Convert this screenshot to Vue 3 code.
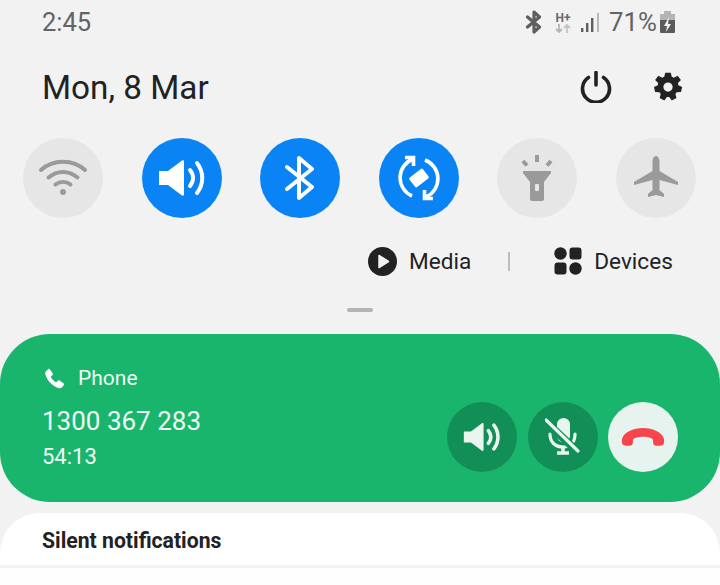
<script setup>
const wifiColor = '#9a9a9a'
</script>

<template>
  <div class="screen">
    <header class="status">
      <span class="time">2:45</span>
      <div class="status-right">
        <svg class="s-bt" width="18" height="24" viewBox="0 0 18 24"><path d="M2.500 7 L14.500 17 L9 22 V2 L14.500 7 L2.500 17" fill="none" stroke="#5f5f5f" stroke-width="3.200" stroke-linejoin="round" stroke-linecap="round"/></svg>
        <div class="hplus"><span class="hp">H+</span><svg width="16" height="9" viewBox="0 0 16 9"><path d="M4 0v8M1 5l3 3 3-3" fill="none" stroke="#b5b5b5" stroke-width="1.800"/><path d="M12 9V1M9 4l3-3 3 3" fill="none" stroke="#c4c4c4" stroke-width="1.800"/></svg></div>
        <svg class="s-sig" width="20" height="21" viewBox="0 0 20 21"><rect x="1" y="16" width="2.400" height="4" fill="#5f5f5f"/><rect x="6" y="11" width="2.400" height="9" fill="#5f5f5f"/><rect x="11" y="6" width="2.400" height="14" fill="#5f5f5f"/><rect x="17" y="1" width="2" height="19" fill="#b9b9b9"/></svg>
        <span class="pct">71%</span>
        <svg width="15" height="22" viewBox="0 0 15 22"><path d="M4 0h7v3h4v7H0V3h4z" fill="#b4b4b4"/><path d="M0 9h15v12a1 1 0 0 1-1 1H1a1 1 0 0 1-1-1z" fill="#5b5b5b"/><path d="M9 6 4 15h3l-1 6 5-8H8z" fill="#f2f2f2"/></svg>
      </div>
    </header>

    <div class="date-row">
      <span class="date">Mon, 8 Mar</span>
      <div class="date-actions">
        <svg width="32" height="32" viewBox="0 0 32 32"><path d="M8.500 6.500a13.500 13.500 0 1 0 15 0" fill="none" stroke="#222" stroke-width="3.600" stroke-linecap="round"/><path d="M16 1.500V14" stroke="#222" stroke-width="3.600" stroke-linecap="round"/></svg>
        <svg width="30" height="30" viewBox="0 0 24 24"><path fill="#222" fill-rule="evenodd" d="M9.800.5h4.400l.8 3.200 1.700.8 3-1.500 2.600 3.400-2.300 2.300.3 1.900 3 1.400-.9 4-3.400.1-1.100 1.500.9 3.200-3.800 1.900-2-2.700h-1.900l-2 2.700-3.800-1.900.9-3.200-1.100-1.500-3.400-.1-.9-4 3-1.400.3-1.900L1.700 6.400l2.600-3.400 3 1.500L9 3.700zM12 8.300a3.700 3.700 0 1 0 0 7.400 3.700 3.700 0 0 0 0-7.400z"/></svg>
      </div>
    </div>

    <div class="toggles">
      <div class="toggle">
        <svg width="50" height="40" viewBox="0 0 50 40"><path d="M3 12C15 1 35 1 47 12" fill="none" :stroke="wifiColor" stroke-width="4" stroke-linecap="round"/><path d="M10.500 19.500C19 12 31 12 39.500 19.500" fill="none" :stroke="wifiColor" stroke-width="4" stroke-linecap="round"/><path d="M17.500 26.500C22 23 28 23 32.500 26.500" fill="none" :stroke="wifiColor" stroke-width="4" stroke-linecap="round"/><circle cx="25" cy="34" r="3" :fill="wifiColor"/></svg>
      </div>
      <div class="toggle on">
        <svg width="48" height="38" viewBox="0 0 48 38"><path d="M1 12h9L24 1.500c1-.5 2 0 2 1v33c0 1-1 1.500-2 1L10 26H1z" fill="#fff"/><path d="M32 11c4 5 4 11 0 16M39 4c7 9 7 21 0 30" fill="none" stroke="#fff" stroke-width="4" stroke-linecap="round"/></svg>
      </div>
      <div class="toggle on">
        <svg width="32" height="46" viewBox="0 0 32 46"><path d="M3 12 L28 32 L15 43 V3 L28 14 L3 34" fill="none" stroke="#fff" stroke-width="4" stroke-linejoin="round" stroke-linecap="round"/></svg>
      </div>
      <div class="toggle on">
        <svg width="46" height="46" viewBox="0 0 46 46"><path d="M17 4A20 20 0 0 0 16 41" fill="none" stroke="#fff" stroke-width="3.600"/><path d="M9 2.500h8.500V11" fill="none" stroke="#fff" stroke-width="3.600"/><path d="M29 5A20 20 0 0 1 30 42" fill="none" stroke="#fff" stroke-width="3.600"/><path d="M37 43.500h-8.500V35" fill="none" stroke="#fff" stroke-width="3.600"/><rect x="14.500" y="17" width="17" height="12" rx="1.500" transform="rotate(-38 23 23)" fill="#fff"/></svg>
      </div>
      <div class="toggle">
        <svg width="32" height="46" viewBox="0 0 32 46"><path d="M2 16h28v2l-7 9v17a2 2 0 0 1-2 2H11a2 2 0 0 1-2-2V27L2 18z" fill="#9a9a9a"/><rect x="14" y="29" width="4" height="7" rx="1" fill="#e6e6e6"/><rect x="14" y="0" width="4" height="7" fill="#9a9a9a"/><path d="M2 6l4 4.500M30 6l-4 4.500" stroke="#9a9a9a" stroke-width="4"/></svg>
      </div>
      <div class="toggle">
        <svg width="46" height="44" viewBox="0 0 46 44"><path d="M23 0c2.200 0 3.500 3 3.500 6v9L45 26v3L26.500 24v10l4.500 4v3l-8-2-8 2v-3l4.500-4V24L1 29v-3l18.500-11V6c0-3 1.300-6 3.500-6z" fill="#9a9a9a"/></svg>
      </div>
    </div>

    <div class="media-row">
      <div class="media">
        <svg width="29" height="29" viewBox="0 0 29 29"><circle cx="14.500" cy="14.500" r="14.500" fill="#222"/><path d="M11 8.500 20.500 14.500 11 20.500z" fill="#f2f2f2" stroke="#f2f2f2" stroke-width="1.500" stroke-linejoin="round"/></svg>
        <span>Media</span>
      </div>
      <i class="sep"></i>
      <div class="devices">
        <svg width="28" height="28" viewBox="0 0 28 28"><circle cx="6.500" cy="6.500" r="6.200" fill="#222"/><rect x="15.500" y="0.500" width="12" height="12" rx="3" fill="#222"/><rect x="0.500" y="15.500" width="12" height="12" rx="3" fill="#222"/><circle cx="21.500" cy="21.500" r="6.200" fill="#222"/></svg>
        <span>Devices</span>
      </div>
    </div>

    <div class="handle"></div>

    <section class="call">
      <div class="call-info">
        <div class="app">
          <svg width="21" height="21" viewBox="0 0 24 24"><path fill="#fff" d="M6.600 1.500 10 6.200c.4.600.3 1.300-.2 1.800L7.700 10c1 2.500 3.700 5.300 6.300 6.400l2.100-2.100c.5-.5 1.300-.5 1.800-.1l4.600 3.400c.6.500.7 1.300.2 1.900l-2 2.500c-1 1.100-2.400 1.500-3.800 1C9.500 20.500 3.500 14.500 1.500 7.100 1.100 5.700 1.500 4.300 2.600 3.300L4.700 1.300c.6-.5 1.400-.4 1.900.2z"/></svg>
          <span>Phone</span>
        </div>
        <div class="number">1300 367 283</div>
        <div class="elapsed">54:13</div>
      </div>
      <div class="call-actions">
        <div class="action dark">
          <svg width="38" height="30" viewBox="0 0 48 38"><path d="M1 12h9L24 1.500c1-.5 2 0 2 1v33c0 1-1 1.500-2 1L10 26H1z" fill="#eaf5ef"/><path d="M32 11c4 5 4 11 0 16M39 4c7 9 7 21 0 30" fill="none" stroke="#eaf5ef" stroke-width="4.500" stroke-linecap="round"/></svg>
        </div>
        <div class="action dark">
          <svg width="36" height="38" viewBox="0 0 36 38"><path d="M12 6a6.500 6 0 0 1 13 0v12a6.500 6.500 0 0 1-13 0z" fill="#eaf5ef"/><path d="M5 16c0 8 5 13 13 13s12-5 12-13" fill="none" stroke="#eaf5ef" stroke-width="3.200" stroke-linecap="round"/><path d="M18 29v5" stroke="#eaf5ef" stroke-width="3.500"/><path d="M12 35h12" stroke="#eaf5ef" stroke-width="3.500"/><path d="M1 4 34 35" stroke="#128f57" stroke-width="8"/><path d="M1 2 33 33" stroke="#eaf5ef" stroke-width="3.200" stroke-linecap="round"/></svg>
        </div>
        <div class="action end">
          <svg width="44" height="20" viewBox="0 0 44 20"><path d="M1 12C3 5 12 1 22 1s19 4 21 11c.400 2 0 5-1 6-1 .800-6 1-8 .500-1.500-.300-2-2-2-5 0-1.500-1-2-2-2.500-3-1-5-1.300-8-1.300s-5 .3-8 1.300c-1 .500-2 1-2 2.500 0 3-.5 4.700-2 5-2 .500-7 .300-8-.500-1-1-1.400-4-1-6z" fill="#f6464c"/></svg>
        </div>
      </div>
    </section>

    <section class="silent">
      <span>Silent notifications</span>
    </section>
    <div class="tail"></div>
  </div>
</template>

<style>
html, body { margin: 0; background: #f2f2f2; }
</style>

<style scoped>
.screen {
  width: 720px;
  height: 585px;
  overflow: hidden;
  background: #f2f2f2;
  font-family: Roboto, "Liberation Sans", sans-serif;
  display: flex;
  flex-direction: column;
}
.status {
  height: 44px;
  padding: 0 45px 0 42px;
  display: flex;
  justify-content: space-between;
  align-items: center;
  color: #636363;
}
.time { font-size: 25.5px; }
.status-right { display: flex; align-items: center; }
.s-bt { margin-right: 11px; }
.hplus { display: flex; flex-direction: column; align-items: center; width: 18px; margin-right: 8px; }
.hp { font-size: 12px; font-weight: 700; line-height: 12px; color: #6a6a6a; }
.s-sig { margin-right: 9px; }
.pct { font-size: 25.8px; margin-right: 3px; }
.date-row {
  height: 86px;
  padding: 0 37px 0 42px;
  display: flex;
  justify-content: space-between;
  align-items: center;
}
.date { font-size: 33.3px; color: #222; }
.date-actions { display: flex; align-items: center; gap: 41px; }
.toggles {
  margin-top: 8px;
  padding: 0 24px 0 23px;
  display: flex;
  justify-content: space-between;
}
.toggle {
  width: 80px;
  height: 80px;
  border-radius: 50%;
  background: #e6e6e6;
  display: flex;
  align-items: center;
  justify-content: center;
}
.toggle.on { background: #0a84f5; }
.media-row {
  margin-top: 26px;
  height: 34px;
  padding-left: 368px;
  display: flex;
  align-items: center;
  color: #222;
  font-size: 22.6px;
}
.media, .devices { display: flex; align-items: center; gap: 12px; }
.sep { width: 2px; height: 19px; background: #bdbdbd; margin: 0 44px 0 37px; }
.handle {
  width: 26px;
  height: 4px;
  border-radius: 2px;
  background: #b4b4b4;
  margin: 30px 0 0 347px;
}
.call {
  margin-top: 22px;
  height: 168px;
  box-sizing: border-box;
  border-radius: 50px;
  background: #1ab56d;
  padding: 30px 42px 0;
  display: flex;
  align-items: flex-start;
  justify-content: space-between;
  color: #f0faf5;
}
.call-info { display: flex; flex-direction: column; }
.app { display: flex; align-items: center; gap: 13px; font-size: 21px; line-height: 28px; margin-left: 2px; }
.number { font-size: 26px; line-height: 34px; margin-top: 12px; }
.elapsed { font-size: 22px; line-height: 28px; margin-top: 5px; }
.call-actions { display: flex; gap: 10.5px; margin-top: 38px; }
.action {
  width: 70px;
  height: 70px;
  border-radius: 50%;
  display: flex;
  align-items: center;
  justify-content: center;
}
.action.dark { background: #128f57; }
.action.end { background: #e7f3ee; }
.silent {
  margin-top: 11px;
  height: 52px;
  box-sizing: border-box;
  padding: 2px 42px 0;
  flex: none;
  background: #fff;
  border-radius: 40px 40px 0 0;
  display: flex;
  align-items: center;
  font-size: 21.2px;
  font-weight: 700;
  color: #222;
}
.tail {
  flex: 1;
  background: #fefefe;
  border-top: 3px solid #f3f3f3;
}
</style>
